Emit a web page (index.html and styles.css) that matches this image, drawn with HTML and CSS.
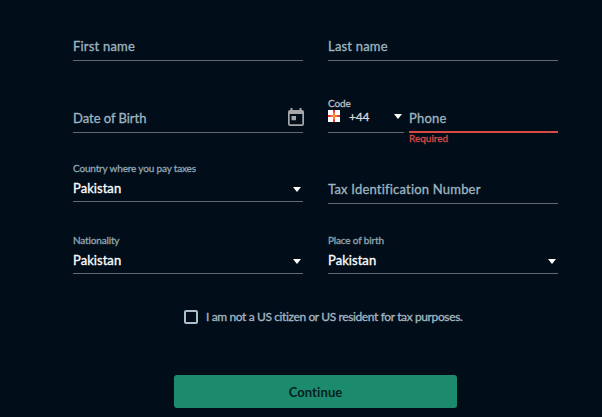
FILE: index.html
```html
<!DOCTYPE html>
<html lang="en">
<head>
    <meta charset="UTF-8">
    <meta name="viewport" content="width=device-width, initial-scale=1.0">
    <title>Personal details</title>
    <link rel="stylesheet" href="styles.css">
</head>
<body>
    <form class="details-form">
        <div class="fields">
            <div class="field">
                <span class="placeholder">First name</span>
            </div>
            <div class="field">
                <span class="placeholder">Last name</span>
            </div>

            <div class="field">
                <span class="placeholder birth">Date of Birth</span>
                <svg class="calendar" width="16" height="18" viewBox="0 0 16 18">
                    <path fill-rule="evenodd" d="M2.500 0h2v2h7V0h2v2h.5a2 2 0 0 1 2 2v12a2 2 0 0 1-2 2H2a2 2 0 0 1-2-2V4a2 2 0 0 1 2-2h.5zM1.700 6v10.300h12.600V6zM3.500 8H8v4.300H3.500z"/>
                </svg>
            </div>
            <div class="phone-group">
                <div class="field code">
                    <div class="code-content">
                        <span class="label">Code</span>
                        <div class="code-value">
                            <svg class="flag" width="12" height="12" viewBox="0 0 12 12">
                                <rect width="12" height="12" fill="#fff"/>
                                <path d="M5 0h2v5h5v2H7v5H5V7H0V5h5z" fill="#e8323c"/>
                                <path d="M5.400 2.500h1.200v2.900h2.900v1.200H6.600v2.900H5.400V6.600H2.500V5.400h2.900z" fill="#f9b52c"/>
                            </svg>
                            <span>+44</span>
                        </div>
                    </div>
                    <span class="arrow"></span>
                </div>
                <div class="field phone invalid">
                    <span class="placeholder">Phone</span>
                    <span class="error">Required</span>
                </div>
            </div>

            <div class="field select country">
                <div>
                    <span class="label">Country where you pay taxes</span>
                    <span class="value">Pakistan</span>
                </div>
                <span class="arrow"></span>
            </div>
            <div class="field">
                <span class="placeholder">Tax Identification Number</span>
            </div>

            <div class="field select">
                <div>
                    <span class="label">Nationality</span>
                    <span class="value">Pakistan</span>
                </div>
                <span class="arrow"></span>
            </div>
            <div class="field select">
                <div>
                    <span class="label">Place of birth</span>
                    <span class="value">Pakistan</span>
                </div>
                <span class="arrow"></span>
            </div>
        </div>

        <label class="confirm">
            <input type="checkbox">
            <span>I am not a US citizen or US resident for tax purposes.</span>
        </label>

        <button type="button" class="continue">Continue</button>
    </form>
</body>
</html>
```
FILE: styles.css
```css
body {
    margin: 0;
    background-color: #020d1a;
    color: #fff;
    font-family: Lato, sans-serif;
    font-size: 13px;
    -webkit-text-stroke: 0.3px currentColor;
}
.details-form {
    display: flex;
    flex-direction: column;
    height: 417px;
    box-sizing: border-box;
    padding: 0 44px 0 73px;
    overflow: hidden;
}
.fields {
    display: grid;
    grid-template-columns: 230px 230px;
    grid-template-rows: 61px 72px 71px 70px;
    column-gap: 25px;
    align-items: end;
}
.field {
    display: flex;
    justify-content: space-between;
    align-items: flex-end;
    box-sizing: border-box;
    height: 40px;
    border-bottom: 1px solid #626870;
}
.placeholder {
    color: #9db5c0;
    line-height: 16px;
    padding-bottom: 6px;
    letter-spacing: 0.2px;
}
.birth {
    letter-spacing: -0.03px;
}
.label {
    display: block;
    color: #8fa6b1;
    font-size: 10px;
    line-height: 12px;
    letter-spacing: -0.16px;
}
.value {
    display: block;
    line-height: 16px;
    margin-top: 6px;
    padding-bottom: 5px;
    letter-spacing: 0.05px;
}
.country {
    margin-bottom: 2px;
}
.arrow {
    width: 0;
    height: 0;
    margin: 0 2px 9px 0;
    border: 4.5px solid transparent;
    border-top: 5px solid #fff;
    border-bottom: 0;
}
.calendar {
    fill: #a5a7aa;
    margin: 0 -1px 6px 0;
}
.phone-group {
    display: flex;
    gap: 5px;
}
.code {
    width: 76px;
}
.code .arrow {
    margin-bottom: 13px;
}
.code .label {
    color: #b4bdc4;
    letter-spacing: -0.1px;
}
.code-value {
    display: flex;
    align-items: center;
    gap: 9px;
    height: 14px;
    padding-bottom: 9px;
    color: #d5d8da;
    font-size: 12px;
    letter-spacing: -0.2px;
}
.phone {
    flex: 1;
    flex-direction: column;
    justify-content: flex-end;
    align-items: flex-start;
}
.invalid {
    border-bottom: 2px solid #d84a43;
}
.invalid .placeholder {
    padding-bottom: 5px;
}
/* takes no room, so the message hangs below the line */
.error {
    height: 0;
    color: #d84a43;
    font-size: 10px;
    line-height: 14px;
}
.confirm {
    display: flex;
    align-items: center;
    gap: 8px;
    height: 16px;
    margin: 35px 0 0 111px;
    color: #a3b8c2;
    font-size: 12px;
    line-height: 14px;
    letter-spacing: -0.38px;
}
.confirm input {
    appearance: none;
    box-sizing: border-box;
    width: 14px;
    height: 14px;
    margin: 0;
    border: 2px solid #a9c0cb;
    border-radius: 2px;
}
.continue {
    width: 283px;
    height: 33px;
    margin: 50px 0 0 101px;
    padding: 0;
    border: 0;
    border-radius: 3px;
    background-color: #1c8a6c;
    color: #04211f;
    font-family: inherit;
    font-size: 13px;
    font-weight: 700;
    letter-spacing: 0.1px;
    -webkit-text-stroke: 0;
}
```
